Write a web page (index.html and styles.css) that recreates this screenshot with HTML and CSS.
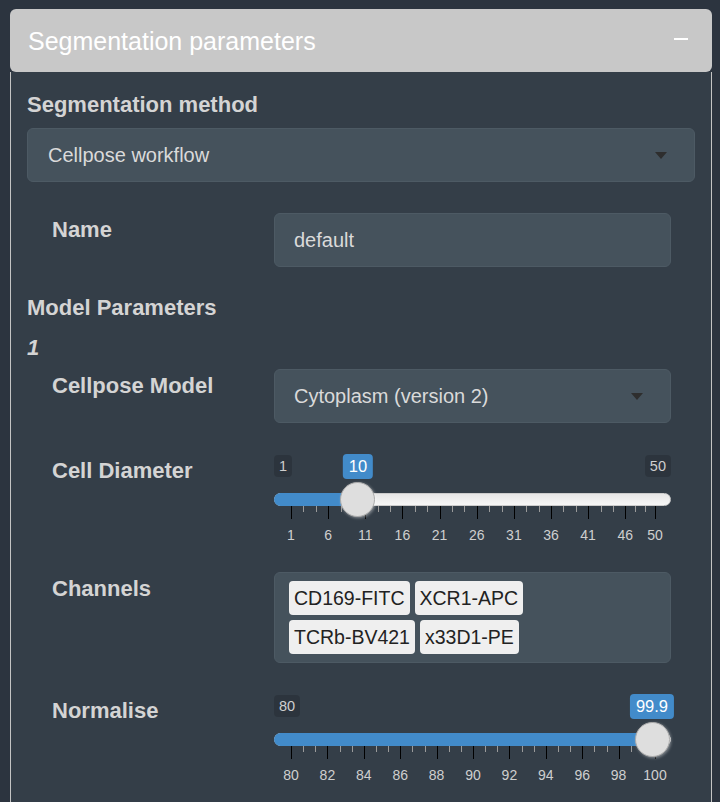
FILE: index.html
```html
<!DOCTYPE html>
<html>
<head>
<meta charset="utf-8">
<link rel="stylesheet" href="styles.css">
</head>
<body>
<div class="panel">
  <div class="panel-header">
    <span class="panel-title">Segmentation parameters</span>
    <span class="minus"></span>
  </div>
  <div class="panel-body">
    <div class="section-label">Segmentation method</div>
    <div class="select select-wide"><span>Cellpose workflow</span><span class="caret"></span></div>

    <div class="row row-first">
      <div class="label">Name</div>
      <div class="input">default</div>
    </div>

    <div class="section-label section-model">Model Parameters</div>
    <div class="index-label">1</div>

    <div class="row row-model">
      <div class="label">Cellpose Model</div>
      <div class="select"><span>Cytoplasm (version 2)</span><span class="caret caret-small"></span></div>
    </div>

    <div class="row">
      <div class="label">Cell Diameter</div>
      <div class="slider">
        <span class="irs-min">1</span>
        <span class="irs-max">50</span>
        <div class="irs-line"></div>
        <div class="irs-bar" style="width:84px"></div>
        <div class="irs-grid">
          <span class="pol" style="left:17px"></span>
          <span class="pol small" style="left:29.4px"></span>
          <span class="pol small" style="left:41.8px"></span>
          <span class="pol" style="left:54.1px"></span>
          <span class="pol small" style="left:66.5px"></span>
          <span class="pol small" style="left:78.9px"></span>
          <span class="pol" style="left:91.3px"></span>
          <span class="pol small" style="left:103.7px"></span>
          <span class="pol small" style="left:116.1px"></span>
          <span class="pol" style="left:128.4px"></span>
          <span class="pol small" style="left:140.8px"></span>
          <span class="pol small" style="left:153.2px"></span>
          <span class="pol" style="left:165.6px"></span>
          <span class="pol small" style="left:178px"></span>
          <span class="pol small" style="left:190.3px"></span>
          <span class="pol" style="left:202.7px"></span>
          <span class="pol small" style="left:215.1px"></span>
          <span class="pol small" style="left:227.5px"></span>
          <span class="pol" style="left:239.9px"></span>
          <span class="pol small" style="left:252.2px"></span>
          <span class="pol small" style="left:264.6px"></span>
          <span class="pol" style="left:277px"></span>
          <span class="pol small" style="left:289.4px"></span>
          <span class="pol small" style="left:301.8px"></span>
          <span class="pol" style="left:314.1px"></span>
          <span class="pol small" style="left:326.5px"></span>
          <span class="pol small" style="left:338.9px"></span>
          <span class="pol" style="left:351.3px"></span>
          <span class="pol small" style="left:361.2px"></span>
          <span class="pol small" style="left:371.1px"></span>
          <span class="pol" style="left:381px"></span>
          <span class="grid-text" style="left:17px">1</span>
          <span class="grid-text" style="left:54.1px">6</span>
          <span class="grid-text" style="left:91.3px">11</span>
          <span class="grid-text" style="left:128.4px">16</span>
          <span class="grid-text" style="left:165.6px">21</span>
          <span class="grid-text" style="left:202.7px">26</span>
          <span class="grid-text" style="left:239.9px">31</span>
          <span class="grid-text" style="left:277px">36</span>
          <span class="grid-text" style="left:314.1px">41</span>
          <span class="grid-text" style="left:351.3px">46</span>
          <span class="grid-text" style="left:381px">50</span>
        </div>
        <span class="handle" style="left:83.9px"></span>
        <span class="irs-single" style="left:83.9px">10</span>
      </div>
    </div>

    <div class="row">
      <div class="label">Channels</div>
      <div class="tags">
        <div class="tag-list">
          <span class="tag">CD169-FITC</span>
          <span class="tag">XCR1-APC</span>
          <span class="tag">TCRb-BV421</span>
          <span class="tag">x33D1-PE</span>
        </div>
      </div>
    </div>

    <div class="row">
      <div class="label">Normalise</div>
      <div class="slider">
        <span class="irs-min">80</span>
        <div class="irs-line"></div>
        <div class="irs-bar" style="width:379px"></div>
        <div class="irs-grid">
          <span class="pol" style="left:17px"></span>
          <span class="pol small" style="left:29.1px"></span>
          <span class="pol small" style="left:41.3px"></span>
          <span class="pol" style="left:53.4px"></span>
          <span class="pol small" style="left:65.5px"></span>
          <span class="pol small" style="left:77.7px"></span>
          <span class="pol" style="left:89.8px"></span>
          <span class="pol small" style="left:101.9px"></span>
          <span class="pol small" style="left:114.1px"></span>
          <span class="pol" style="left:126.2px"></span>
          <span class="pol small" style="left:138.3px"></span>
          <span class="pol small" style="left:150.5px"></span>
          <span class="pol" style="left:162.6px"></span>
          <span class="pol small" style="left:174.7px"></span>
          <span class="pol small" style="left:186.9px"></span>
          <span class="pol" style="left:199px"></span>
          <span class="pol small" style="left:211.1px"></span>
          <span class="pol small" style="left:223.3px"></span>
          <span class="pol" style="left:235.4px"></span>
          <span class="pol small" style="left:247.5px"></span>
          <span class="pol small" style="left:259.7px"></span>
          <span class="pol" style="left:271.8px"></span>
          <span class="pol small" style="left:283.9px"></span>
          <span class="pol small" style="left:296.1px"></span>
          <span class="pol" style="left:308.2px"></span>
          <span class="pol small" style="left:320.3px"></span>
          <span class="pol small" style="left:332.5px"></span>
          <span class="pol" style="left:344.6px"></span>
          <span class="pol small" style="left:356.7px"></span>
          <span class="pol small" style="left:368.9px"></span>
          <span class="pol" style="left:381px"></span>
          <span class="grid-text" style="left:17px">80</span>
          <span class="grid-text" style="left:53.4px">82</span>
          <span class="grid-text" style="left:89.8px">84</span>
          <span class="grid-text" style="left:126.2px">86</span>
          <span class="grid-text" style="left:162.6px">88</span>
          <span class="grid-text" style="left:199px">90</span>
          <span class="grid-text" style="left:235.4px">92</span>
          <span class="grid-text" style="left:271.8px">94</span>
          <span class="grid-text" style="left:308.2px">96</span>
          <span class="grid-text" style="left:344.6px">98</span>
          <span class="grid-text" style="left:381px">100</span>
        </div>
        <span class="handle" style="left:378px"></span>
        <span class="irs-single" style="left:378px">99.9</span>
      </div>
    </div>
  </div>
</div>
</body>
</html>
```

FILE: styles.css
```css
html, body {
  margin: 0;
  padding: 0;
  background: #2c343f;
  font-family: "Liberation Sans", Arial, Helvetica, sans-serif;
  height: 100%;
  overflow: hidden;
}

.panel {
  margin: 9px 8px 0 10px;
}

.panel-header {
  height: 63px;
  background: #c8c8c8;
  border-radius: 6px;
  display: flex;
  align-items: center;
  justify-content: space-between;
  padding: 0 24px 0 18px;
}

.panel-title {
  color: #ffffff;
  font-size: 25px;
  line-height: 30px;
}

.minus {
  width: 14px;
  height: 2px;
  background: #ffffff;
  margin-bottom: 4px;
}

.panel-body {
  background: #343e48;
  border-left: 1px solid #c4c4c4;
  border-right: 1px solid #c4c4c4;
  padding: 20px 16px 80px;
  color: #d4d4d4;
}

.section-label {
  font-size: 22px;
  font-weight: bold;
  line-height: 26px;
  margin-bottom: 10px;
}

.section-model {
  margin-top: 28px;
  margin-bottom: 0;
}

.index-label {
  font-size: 22px;
  font-weight: bold;
  font-style: italic;
  line-height: 26px;
  margin-top: 14px;
}

.select, .input {
  box-sizing: border-box;
  height: 54px;
  background: #45525c;
  border: 1px solid #4d5a64;
  border-radius: 6px;
  display: flex;
  align-items: center;
  justify-content: space-between;
  padding: 0 27px 0 19px;
  font-size: 20px;
  color: #dadada;
}

.select-wide {
  padding-left: 20px;
}

.caret {
  width: 0;
  height: 0;
  border-left: 6.5px solid transparent;
  border-right: 6.5px solid transparent;
  border-top: 7px solid #2e2e2e;
}

.row {
  display: grid;
  grid-template-columns: 222px 1fr;
  padding: 0 24px 0 25px;
  margin-top: 31px;
}

.row-model {
  margin-top: 8px;
}

.label {
  font-size: 22px;
  font-weight: bold;
  line-height: 26px;
  padding-top: 4px;
}

.tags {
  box-sizing: border-box;
  background: #45525c;
  border: 1px solid #4d5a64;
  border-radius: 6px;
  padding: 8px 14px;
  min-height: 91px;
}

.tag-list {
  display: flex;
  flex-wrap: wrap;
  gap: 5px;
  max-width: 245px;
}

.tag {
  background: #efefef;
  color: #222;
  font-size: 19.5px;
  line-height: 34px;
  height: 34px;
  padding: 0 5px;
  border-radius: 4px;
}

.slider {
  position: relative;
  height: 87px;
}

.irs-min, .irs-max {
  position: absolute;
  top: 1px;
  font-size: 14.5px;
  line-height: 22px;
  padding: 0 5px;
  background: rgba(0, 0, 0, 0.15);
  border-radius: 4px;
  color: #cfcfcf;
}

.irs-min { left: 0; }
.irs-max { right: 0; }

.irs-single {
  position: absolute;
  top: 0;
  transform: translateX(-50%);
  font-size: 16.5px;
  line-height: 25px;
  padding: 0 6px;
  background: #428bca;
  color: #fff;
  border-radius: 4px;
}

.irs-line {
  position: absolute;
  left: 0;
  right: 0;
  top: 39px;
  height: 13px;
  box-sizing: border-box;
  border: 1px solid #cccccc;
  border-radius: 8px;
  background: linear-gradient(to bottom, #dedede -50%, #ffffff 150%);
}

.irs-bar {
  position: absolute;
  left: 0;
  top: 39px;
  height: 13px;
  background: #428bca;
  border-radius: 8px 0 0 8px;
}

.handle {
  position: absolute;
  top: 28px;
  width: 35px;
  height: 35px;
  box-sizing: border-box;
  margin-left: -17.5px;
  border-radius: 50%;
  border: 1px solid #ababab;
  background: #dedede;
  box-shadow: 1px 1px 3px rgba(255, 255, 255, 0.4);
}

.irs-grid {
  position: absolute;
  left: 0;
  right: 0;
  top: 52px;
  height: 35px;
}

.pol {
  position: absolute;
  top: 0;
  width: 1px;
  height: 13px;
  background: #000;
}

.pol.small {
  height: 6px;
  background: #9a9a9a;
}

.grid-text {
  position: absolute;
  top: 21px;
  transform: translateX(-50%);
  font-size: 14px;
  line-height: 16px;
  color: #cfcfcf;
}
```
